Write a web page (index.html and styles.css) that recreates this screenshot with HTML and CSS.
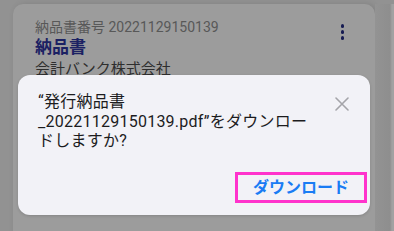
FILE: index.html
```html
<!DOCTYPE html>
<html lang="ja">
<head>
<meta charset="utf-8">
<link rel="stylesheet" href="styles.css">
</head>
<body>
<div class="screen">
  <div class="card">
    <div class="card-head">
      <div class="card-info">
        <div class="doc-no">納品書番号 20221129150139</div>
        <div class="doc-title">納品書</div>
        <div class="doc-company">会計バンク株式会社</div>
      </div>
      <div class="kebab"><span></span><span></span><span></span></div>
    </div>
  </div>
  <div class="edge"></div>
</div>
<div class="dialog">
  <div class="dialog-body">
    <p class="message">“発行納品書<br>_20221129150139.pdf”をダウンロー<br>ドしますか?</p>
    <svg class="close" width="14" height="14" viewBox="0 0 14 14"><path d="M1 1 L13 13 M13 1 L1 13" stroke="#a4a4a9" stroke-width="1.6" stroke-linecap="round" fill="none"/></svg>
  </div>
  <div class="dialog-actions">
    <button class="download">ダウンロード</button>
  </div>
</div>
</body>
</html>
```

FILE: styles.css
```css
* { box-sizing: border-box; }
html, body { margin: 0; padding: 0; }
body {
  width: 394px;
  height: 231px;
  overflow: hidden;
  background: #929292;
  font-family: "Roboto", "Noto Sans CJK JP", sans-serif;
  position: relative;
}
.screen {
  display: flex;
  padding: 4px 0 0 13px;
  height: 231px;
  overflow: hidden;
}
.card {
  width: 362px;
  height: 240px;
  background: #9c9c9c;
  border-radius: 10px;
  box-shadow: 2px 0 6px rgba(0,0,0,0.12);
  padding: 14px 0 0 22px;
}
.edge {
  flex: 1;
  background: linear-gradient(to right, #939393 0, #8e8e8e 15px, #a2a2a2 17px);
}
.card-head {
  display: flex;
  justify-content: space-between;
}
.doc-no {
  font-size: 14px;
  line-height: 18px;
  color: #585858;
}
.doc-title {
  font-size: 17px;
  line-height: 22px;
  font-weight: 700;
  color: #1b2163;
}
.doc-company {
  font-size: 15px;
  line-height: 20px;
  color: #2e2e2e;
  margin-top: 1px;
}
.kebab {
  display: flex;
  flex-direction: column;
  gap: 2.5px;
  margin: 6px 31px 0 0;
}
.kebab span {
  width: 3.5px;
  height: 3.5px;
  border-radius: 50%;
  background: #161b52;
}
.dialog {
  position: absolute;
  left: 18px;
  top: 75px;
  width: 352px;
  height: 140px;
  background: #f2f2f7;
  border-radius: 12px;
  box-shadow: 0 1px 3px rgba(0,0,0,0.15);
  display: flex;
  flex-direction: column;
}
.dialog-body {
  display: flex;
  justify-content: space-between;
  padding: 17px 21px 0 20px;
}
.message {
  margin: 0;
  font-size: 16px;
  line-height: 19.5px;
  letter-spacing: 0.25px;
  color: #1c1c1e;
  white-space: nowrap;
}
.close {
  margin-top: 5px;
}
.dialog-actions {
  display: flex;
  justify-content: flex-end;
  margin-top: auto;
  padding: 0 3px 12px 0;
}
.download {
  width: 132px;
  height: 31px;
  border: 3px solid #ff33cc;
  background: transparent;
  color: #1a7cf4;
  font-family: "Roboto", "Noto Sans CJK JP", sans-serif;
  font-size: 16px;
  font-weight: 700;
  padding: 0;
  line-height: 25px;
}
```
